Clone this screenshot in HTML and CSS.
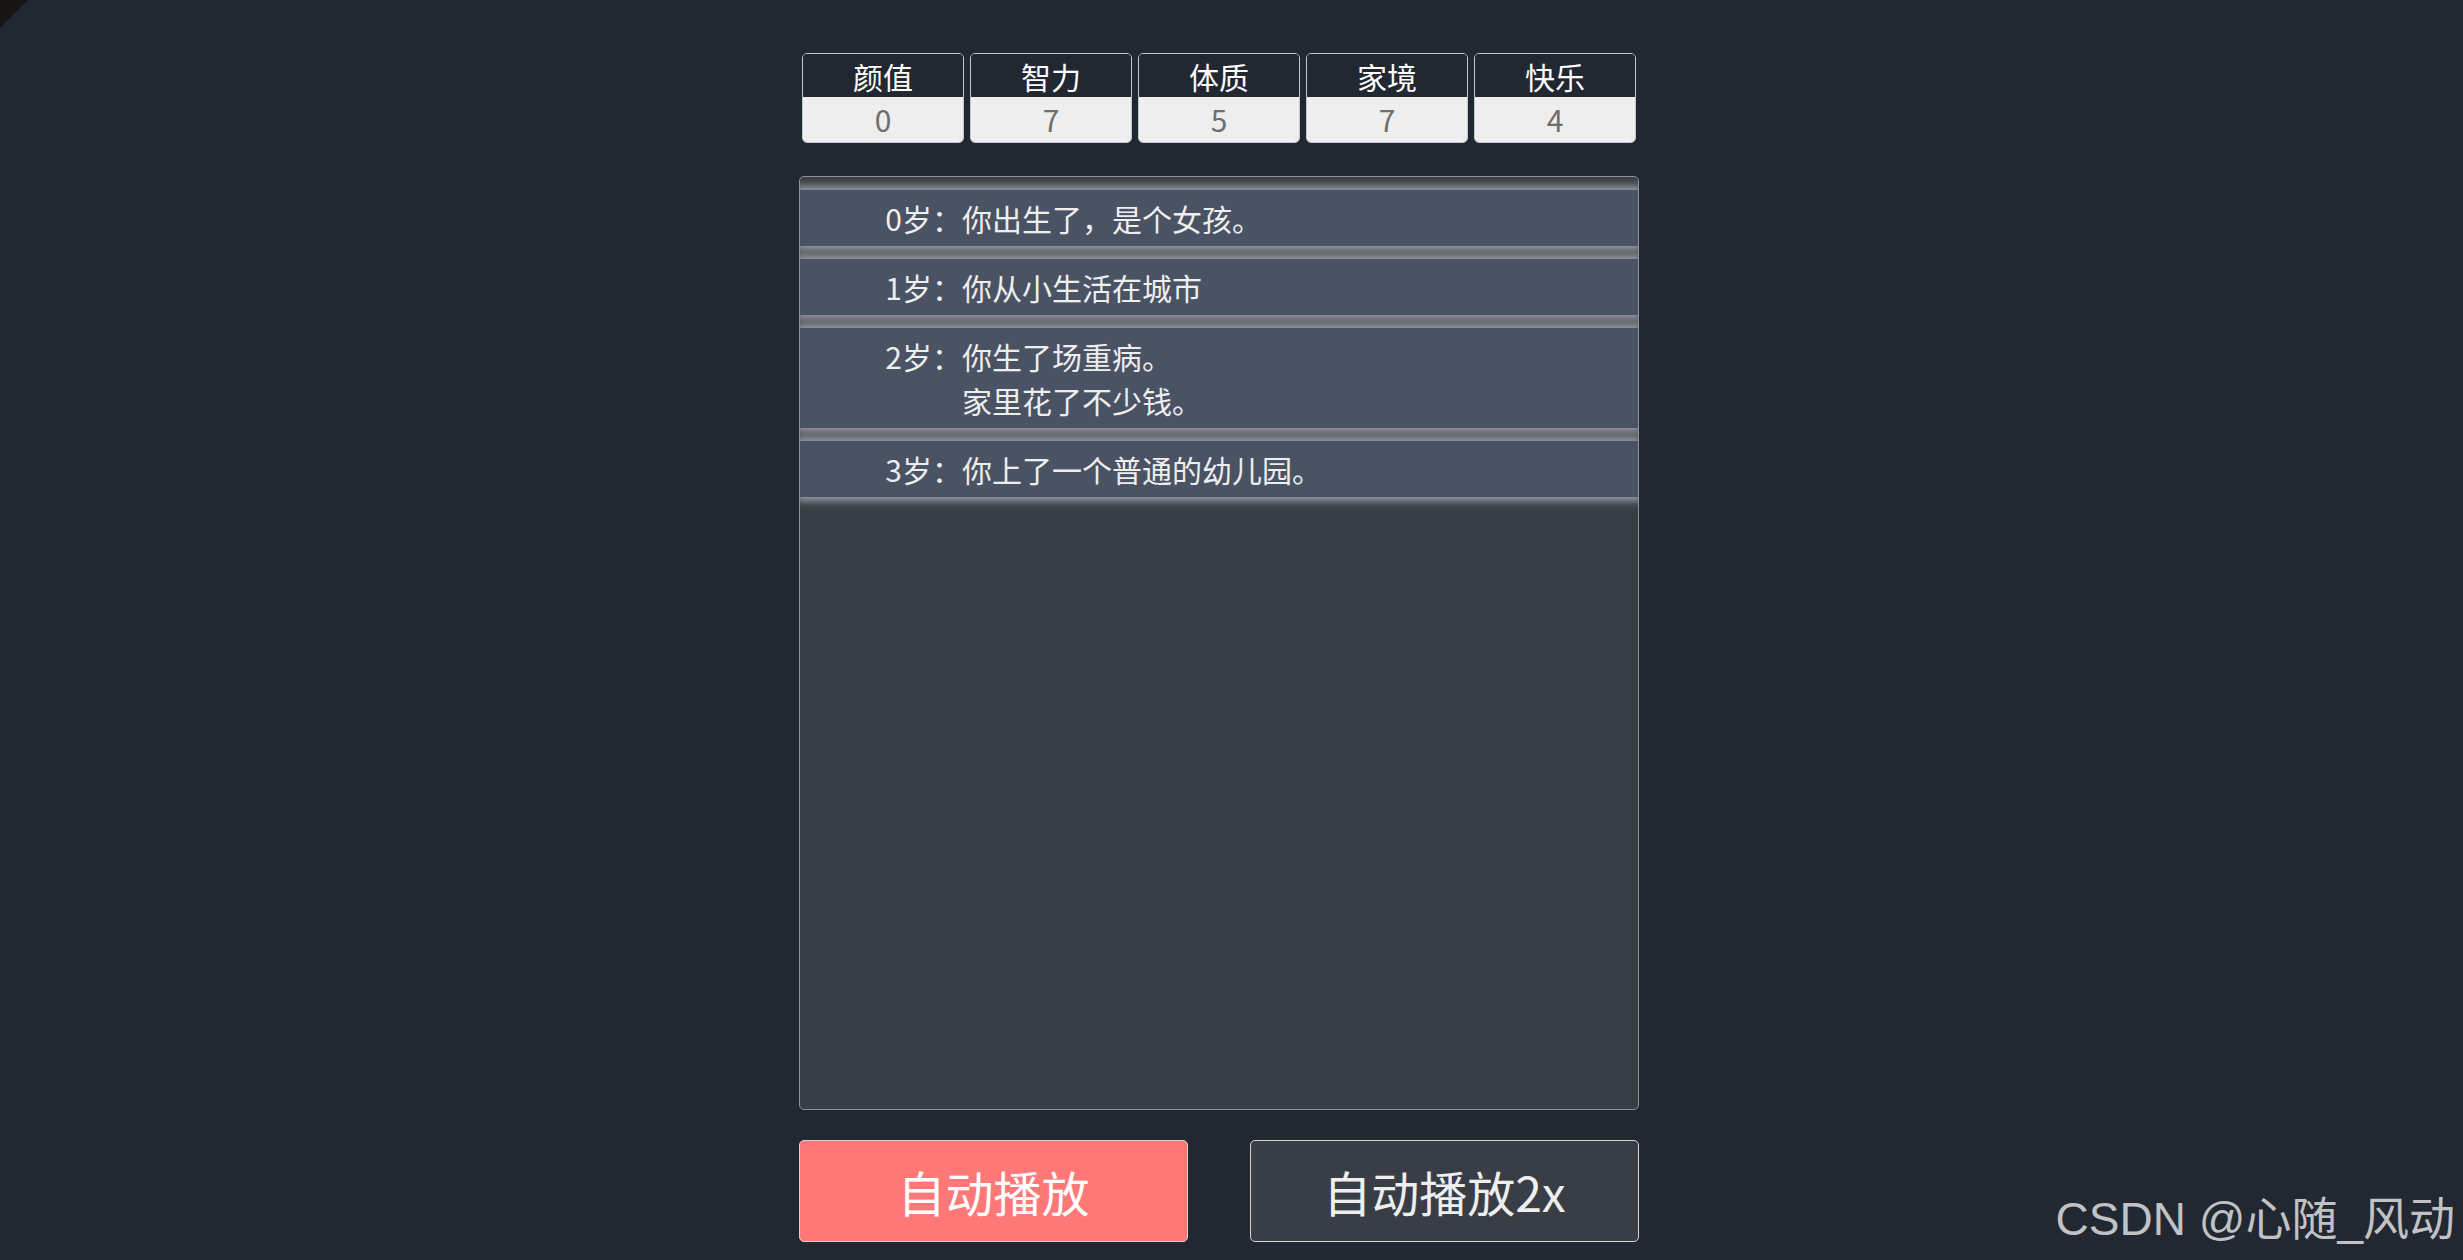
FILE: index.html
```html
<!DOCTYPE html>
<html lang="zh-CN">
<head>
<meta charset="utf-8">
<title>人生重开模拟器</title>
<link rel="stylesheet" href="styles.css">
</head>
<body>
<div class="corner"></div>
<main class="app">
  <ul class="stats">
    <li class="stat"><div class="stat-name">颜值</div><div class="stat-value">0</div></li>
    <li class="stat"><div class="stat-name">智力</div><div class="stat-value">7</div></li>
    <li class="stat"><div class="stat-name">体质</div><div class="stat-value">5</div></li>
    <li class="stat"><div class="stat-name">家境</div><div class="stat-value">7</div></li>
    <li class="stat"><div class="stat-name">快乐</div><div class="stat-value">4</div></li>
  </ul>
  <div class="panel">
    <ul class="trajectory">
      <li class="event"><span class="age">0岁：</span><span class="text">你出生了，是个女孩。</span></li>
      <li class="event"><span class="age">1岁：</span><span class="text">你从小生活在城市</span></li>
      <li class="event"><span class="age">2岁：</span><span class="text">你生了场重病。<br>家里花了不少钱。</span></li>
      <li class="event"><span class="age">3岁：</span><span class="text">你上了一个普通的幼儿园。</span></li>
    </ul>
  </div>
  <div class="actions">
    <button class="btn btn-primary">自动播放</button>
    <button class="btn">自动播放2x</button>
  </div>
</main>
<div class="watermark">CSDN @心随_风动</div>
</body>
</html>
```

FILE: styles.css
```css
html, body {
  margin: 0;
  height: 100%;
}

body {
  background: #222831;
  font-family: "Noto Sans CJK SC", "Noto Sans", sans-serif;
  color: #eeeeee;
  overflow: hidden;
  display: flex;
  justify-content: center;
  padding-right: 25px;
  box-sizing: border-box;
}

.corner {
  position: absolute;
  top: 0;
  left: 0;
  width: 0;
  height: 0;
  border-top: 28px solid #171614;
  border-right: 28px solid transparent;
}

.app {
  width: 840px;
  padding-top: 53px;
}

.stats {
  list-style: none;
  margin: 0;
  padding: 0 3px;
  display: flex;
  gap: 6px;
}

.stat {
  width: 162px;
  box-sizing: border-box;
  border: 1px solid #c6c8cb;
  border-radius: 5px;
  overflow: hidden;
}

.stat-name {
  height: 43px;
  line-height: 45px;
  text-align: center;
  font-size: 30px;
  color: #ffffff;
  background: #222831;
}

.stat-value {
  height: 45px;
  line-height: 45px;
  text-align: center;
  font-size: 30px;
  color: #6e6e6e;
  background: #eeeeee;
}

.panel {
  margin-top: 33px;
  height: 934px;
  box-sizing: border-box;
  border: 1px solid #8e9196;
  border-radius: 5px;
  background: #393e46;
  overflow: hidden;
}

.trajectory {
  list-style: none;
  margin: 0;
  padding: 13px 0 0;
  display: flex;
  flex-direction: column;
  gap: 13px;
}

.event {
  display: flex;
  background: #4a5364;
  padding: 6px 0;
  font-size: 30px;
  line-height: 44px;
  color: #eeeeee;
  box-shadow: 0 0 8px 4px rgba(180, 183, 190, 0.8);
}

.age {
  flex: 0 0 162px;
  text-align: right;
}

.actions {
  margin-top: 30px;
  display: flex;
  justify-content: space-between;
}

.btn {
  width: 389px;
  height: 102px;
  padding: 0;
  border: 1px solid #d6d6d6;
  border-radius: 5px;
  background: #393e46;
  color: #eeeeee;
  font-family: "Noto Sans CJK SC", "Noto Sans", sans-serif;
  font-size: 48px;
}

.btn-primary {
  background: #ff7878;
  color: #ffffff;
}

.watermark {
  position: absolute;
  right: 8px;
  bottom: 15px;
  font-family: "Liberation Sans", "Noto Sans CJK SC", sans-serif;
  font-size: 46px;
  line-height: 52px;
  color: #c0c2c5;
}
```
